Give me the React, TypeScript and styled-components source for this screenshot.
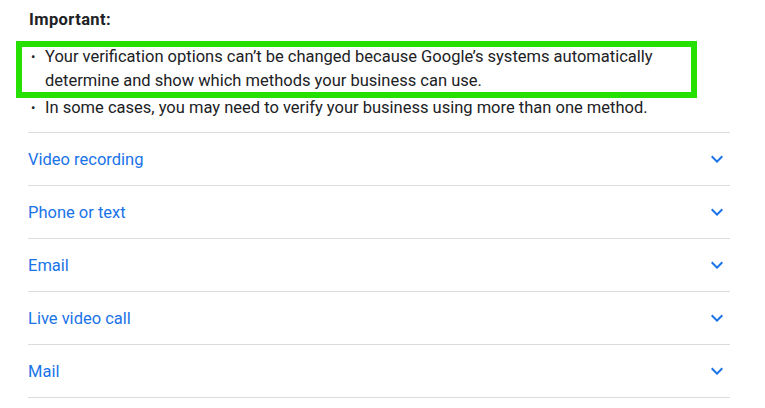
import React from 'react';
import styled, { createGlobalStyle } from 'styled-components';

const GlobalStyle = createGlobalStyle`
    body {
        margin: 0;
        background: #ffffff;
        font-family: Roboto, 'Liberation Sans', Arial, sans-serif;
    }
`;

const Wrapper = styled.div`
    width: 702px;
    padding: 8px 0 0 28px;
    color: #202124;
`;

const Title = styled.div`
    font-size: 16.5px;
    line-height: 24px;
    font-weight: 700;
    letter-spacing: 0.4px;
    margin-left: 1px;
`;

const NoteList = styled.ul`
    list-style: none;
    width: 650px;
    margin: 13px 0 12px;
    padding: 0;
`;

const NoteItem = styled.li`
    position: relative;
    font-size: 16.5px;
    line-height: 24px;
    padding-left: 17px;
    margin-bottom: 3px;
    &:last-child {
        margin-bottom: 0;
    }
    &::before {
        content: '•';
        position: absolute;
        left: 3px;
        top: 0;
        font-size: 13px;
    }
`;

const Highlight = styled.span`
    position: absolute;
    left: -12px;
    right: -19px;
    top: -4px;
    bottom: -5px;
    border: 6px solid #25e000;
    pointer-events: none;
`;

const Accordion = styled.div`
    border-bottom: 1px solid #dadce0;
`;

const Section = styled.div`
    display: flex;
    align-items: center;
    justify-content: space-between;
    height: 52px;
    border-top: 1px solid #dadce0;
    color: #1a73e8;
    font-size: 16.5px;
    cursor: pointer;
`;

const Chevron = styled.svg`
    width: 24px;
    height: 24px;
    margin-right: 1px;
    fill: #1a73e8;
`;

const sections = ['Video recording', 'Phone or text', 'Email', 'Live video call', 'Mail'];

const App: React.FC = () => {
    return (
        <>
            <GlobalStyle />
            <Wrapper>
                <Title>Important:</Title>
                <NoteList>
                    <NoteItem>
                        Your verification options can’t be changed because Google’s systems automatically
                        determine and show which methods your business can use.
                        <Highlight />
                    </NoteItem>
                    <NoteItem>In some cases, you may need to verify your business using more than one method.</NoteItem>
                </NoteList>
                <Accordion>
                    {sections.map((name) => (
                        <Section key={name}>
                            <span>{name}</span>
                            <Chevron viewBox="0 0 24 24">
                                <path d="M16.59 8.59L12 13.17 7.41 8.59 6 10l6 6 6-6z" />
                            </Chevron>
                        </Section>
                    ))}
                </Accordion>
            </Wrapper>
        </>
    );
};

export default App;
